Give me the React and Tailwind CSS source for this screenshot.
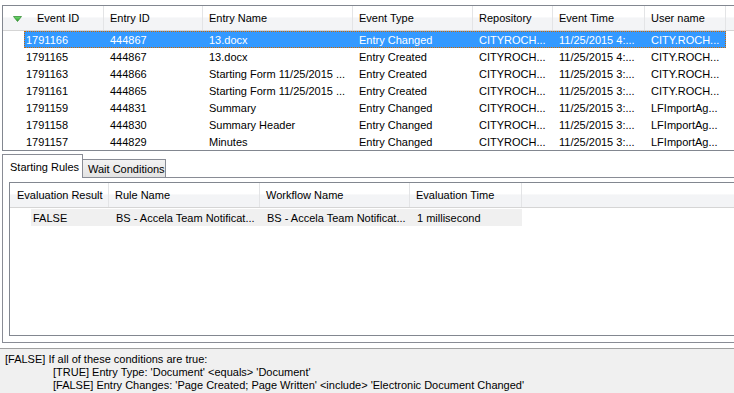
import React from "react";

const EVENTS = [
  ["1791166", "444867", "13.docx", "Entry Changed", "CITYROCH...", "11/25/2015 4:...", "CITY.ROCH..."],
  ["1791165", "444867", "13.docx", "Entry Created", "CITYROCH...", "11/25/2015 4:...", "CITY.ROCH..."],
  ["1791163", "444866", "Starting Form 11/25/2015 ...", "Entry Created", "CITYROCH...", "11/25/2015 3:...", "CITY.ROCH..."],
  ["1791161", "444865", "Starting Form 11/25/2015 ...", "Entry Created", "CITYROCH...", "11/25/2015 3:...", "CITY.ROCH..."],
  ["1791159", "444831", "Summary", "Entry Changed", "CITYROCH...", "11/25/2015 3:...", "LFImportAg..."],
  ["1791158", "444830", "Summary Header", "Entry Changed", "CITYROCH...", "11/25/2015 3:...", "LFImportAg..."],
  ["1791157", "444829", "Minutes", "Entry Changed", "CITYROCH...", "11/25/2015 3:...", "LFImportAg..."],
];

// widths of columns 1..6 (column 0 handled separately because of the indent)
const EVENT_COLS = ["w-[99px]", "w-[150px]", "w-[120px]", "w-[80px]", "w-[92px]", "w-[81px]"];
const EVENT_HEADS = ["Entry ID", "Entry Name", "Event Type", "Repository", "Event Time", "User name"];

const RULE_COLS = ["w-[151px]", "w-[150px]", "w-[112px]"];

function HeaderCell({ width, children, className = "" }) {
  return (
    <div className={`${width} h-full shrink-0 border-r border-[#e3e4e6] pl-[6px] pt-px flex items-center ${className}`}>
      {children}
    </div>
  );
}

function SortArrow() {
  return (
    <svg width="9" height="6" viewBox="0 0 9 6" className="ml-[10px] mr-[15px]">
      <defs>
        <linearGradient id="ga" x1="0" y1="0" x2="0" y2="1">
          <stop offset="0" stopColor="#6fdc6f" />
          <stop offset="1" stopColor="#2b9b2b" />
        </linearGradient>
      </defs>
      <path d="M0.5 0.5 L8.5 0.5 L4.5 5.5 Z" fill="url(#ga)" stroke="#3a8f3a" strokeWidth="0.8" />
    </svg>
  );
}

export default function App() {
  return (
    <div
      className="relative w-[734px] h-[393px] overflow-hidden bg-white text-[11px] leading-none text-black"
      style={{ fontFamily: '"Liberation Sans", Arial, sans-serif' }}
    >
      {/* event list */}
      <div className="mt-[5px] ml-[2px] w-[760px] h-[146px] border border-[#828790] bg-white">
        <div className="flex h-[25px] border-b border-[#d5d5d5] bg-[linear-gradient(#ffffff_0%,#ffffff_45%,#f3f4f6_50%,#f3f4f6_100%)]">
          <div className="w-[101px] h-full shrink-0 border-r border-[#e3e4e6] pt-px flex items-center">
            <SortArrow />
            <span>Event ID</span>
          </div>
          {EVENT_HEADS.map((h, i) => (
            <HeaderCell key={h} width={EVENT_COLS[i]}>
              {h}
            </HeaderCell>
          ))}
          <div className="flex-1" />
        </div>
        {EVENTS.map((row, r) => {
          const selected = r === 0;
          return (
            <div key={row[0]} className="flex h-[17px]">
              <div className="w-[21px] shrink-0" />
              <div
                className={`flex h-full ${
                  selected ? "bg-[#3399ff] text-white outline outline-1 outline-dotted outline-[#cc6600] -outline-offset-1" : ""
                }`}
              >
                <div className="w-[80px] shrink-0 pl-[2px] pt-px flex items-center">{row[0]}</div>
                {row.slice(1).map((cell, i) => (
                  <div key={i} className={`${EVENT_COLS[i]} shrink-0 pl-[6px] pt-px flex items-center whitespace-nowrap overflow-hidden`}>
                    {cell}
                  </div>
                ))}
              </div>
            </div>
          );
        })}
      </div>

      {/* tabs */}
      <div className="mt-[2px] ml-[2px] flex items-end h-[24px]">
        <div className="w-[81px] h-[24px] border border-b-0 border-[#898c95] bg-white pl-[7px] pt-[7px] relative z-10 -mb-px">
          Starting Rules
        </div>
        <div className="w-[83px] h-[18px] border border-l-0 border-b-0 border-[#898c95] bg-[linear-gradient(#f2f2f2,#e3e3e3)] pl-[5px] pt-[4px]">
          Wait Conditions
        </div>
      </div>

      {/* tab panel */}
      <div className="ml-[2px] w-[760px] h-[166px] border border-[#898c95] bg-white px-[6px] pt-[4px]">
        <div className="w-[740px] h-[154px] border border-[#828790]">
          <div className="flex h-[25px] border-b border-[#d5d5d5] bg-[linear-gradient(#ffffff_0%,#ffffff_45%,#f3f4f6_50%,#f3f4f6_100%)]">
            <HeaderCell width="w-[99px]" className="pl-[7px]">Evaluation Result</HeaderCell>
            <HeaderCell width="w-[151px]">Rule Name</HeaderCell>
            <HeaderCell width="w-[150px]">Workflow Name</HeaderCell>
            <HeaderCell width="w-[112px]">Evaluation Time</HeaderCell>
            <div className="flex-1" />
          </div>
          <div className="flex h-[17px] mt-px">
            <div className="w-[21px] shrink-0" />
            <div className="flex h-full bg-[#f0f0f0]">
              <div className="w-[78px] shrink-0 pl-[2px] pt-px flex items-center">FALSE</div>
              {["BS - Accela Team Notificat...", "BS - Accela Team Notificat...", "1 millisecond"].map((c, i) => (
                <div key={i} className={`${RULE_COLS[i]} shrink-0 pl-[7px] pt-px flex items-center whitespace-nowrap`}>
                  {c}
                </div>
              ))}
            </div>
          </div>
        </div>
      </div>

      {/* condition details */}
      <div className="mt-[5px] h-[60px] border-t border-[#a0a0a0] bg-[#f0f0f0] pt-[4px] pl-[5px] leading-[13px]">
        <div>[FALSE] If all of these conditions are true:</div>
        <div className="pl-[48px]">[TRUE] Entry Type: 'Document' &lt;equals&gt; 'Document'</div>
        <div className="pl-[48px]">
          [FALSE] Entry Changes: 'Page Created; Page Written' &lt;include&gt; 'Electronic Document Changed'
        </div>
      </div>
    </div>
  );
}
